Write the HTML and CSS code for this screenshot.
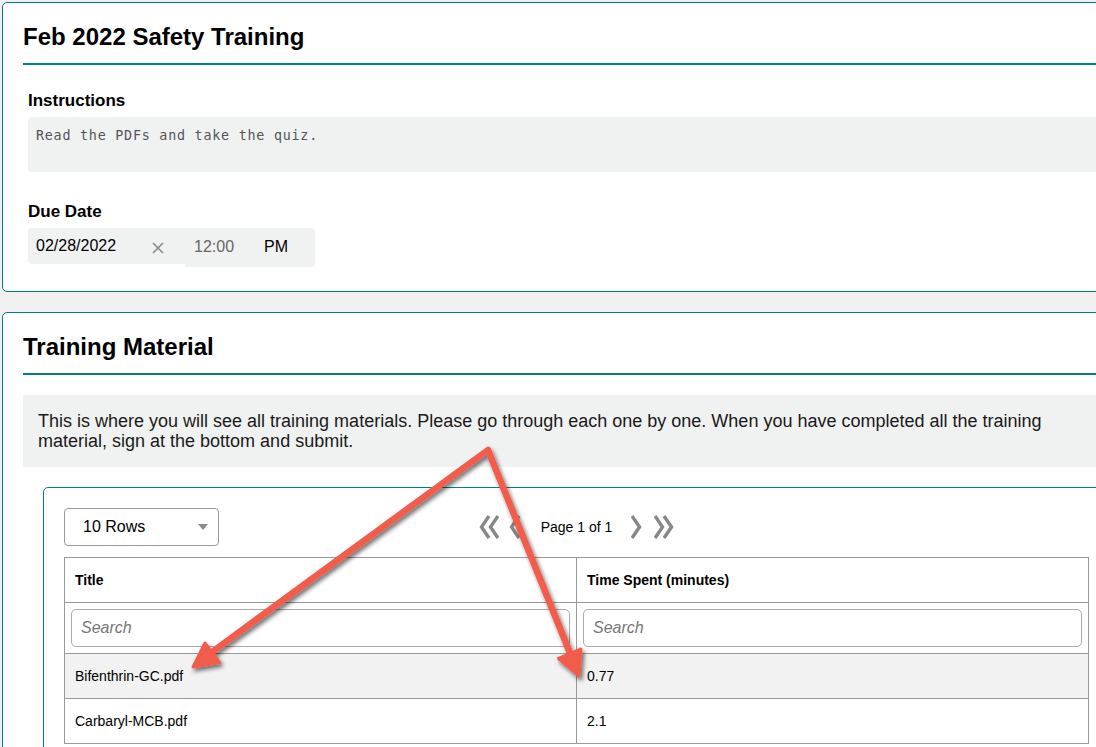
FILE: index.html
```html
<!DOCTYPE html>
<html lang="en">
<head>
<meta charset="utf-8">
<title>Feb 2022 Safety Training</title>
<link rel="stylesheet" href="styles.css">
</head>
<body>
<div class="page">
  <section class="card">
    <h2 class="card-title">Feb 2022 Safety Training</h2>
    <div class="field">
      <div class="field-label">Instructions</div>
      <div class="instructions">Read the PDFs and take the quiz.</div>
    </div>
    <div class="field field-due">
      <div class="field-label">Due Date</div>
      <div class="datetime">
        <div class="date-part">
          <span class="date-value">02/28/2022</span>
          <span class="date-clear">
            <svg width="14" height="14" viewBox="0 0 14 14"><path d="M2 2 L12 12 M12 2 L2 12" stroke="#8a8a8a" stroke-width="1.6" fill="none"/></svg>
          </span>
        </div>
        <div class="time-part">
          <span class="time-value">12:00</span>
          <span class="time-ampm">PM</span>
        </div>
      </div>
    </div>
  </section>

  <section class="card">
    <h2 class="card-title">Training Material</h2>
    <div class="intro">This is where you will see all training materials. Please go through each one by one. When you have completed all the training material, sign at the bottom and submit.</div>

    <div class="grid-box">
      <div class="toolbar">
        <div class="rows-select">
          <span>10 Rows</span>
          <svg class="caret" width="10" height="6" viewBox="0 0 10 6"><path d="M0 0 H10 L5 6 Z" fill="#8a8a8a"/></svg>
        </div>
        <div class="pager">
          <svg class="pg-double" width="20" height="24" viewBox="0 0 20 24"><path d="M10 1 L2.5 12 L10 23 M19 1 L11.5 12 L19 23" stroke="#888" stroke-width="3.4" fill="none"/></svg>
          <svg class="pg-single pg-prev" width="11" height="24" viewBox="0 0 11 24"><path d="M10 1 L2.5 12 L10 23" stroke="#888" stroke-width="3.4" fill="none"/></svg>
          <span class="pg-label">Page 1 of 1</span>
          <svg class="pg-single pg-next" width="11" height="24" viewBox="0 0 11 24"><path d="M1 1 L8.5 12 L1 23" stroke="#888" stroke-width="3.4" fill="none"/></svg>
          <svg class="pg-double" width="20" height="24" viewBox="0 0 20 24"><path d="M1 1 L8.5 12 L1 23 M10 1 L17.5 12 L10 23" stroke="#888" stroke-width="3.4" fill="none"/></svg>
        </div>
        <div></div>
      </div>

      <table class="grid">
        <thead>
          <tr class="head-row"><th>Title</th><th>Time Spent (minutes)</th></tr>
          <tr class="filter-row">
            <td><input class="search" type="text" placeholder="Search"></td>
            <td><input class="search" type="text" placeholder="Search"></td>
          </tr>
        </thead>
        <tbody>
          <tr class="selected"><td>Bifenthrin-GC.pdf</td><td>0.77</td></tr>
          <tr><td>Carbaryl-MCB.pdf</td><td>2.1</td></tr>
        </tbody>
      </table>
    </div>
  </section>
</div>

<svg class="callouts" width="1096" height="747" viewBox="0 0 1096 747">
  <defs>
    <filter id="shade" x="-10%" y="-10%" width="120%" height="120%">
      <feDropShadow dx="2" dy="3" stdDeviation="2" flood-color="#000" flood-opacity="0.55"/>
    </filter>
  </defs>
  <g filter="url(#shade)" fill="#f15b4c" stroke="#f15b4c" stroke-linejoin="round" stroke-linecap="round">
    <polyline points="212,652 488,450 570,653" fill="none" stroke-width="6.5"/>
    <polygon points="193,667 219.5,662.5 205,643" stroke-width="3"/>
    <polygon points="579,676 581,649 558.5,658.5" stroke-width="3"/>
  </g>
</svg>
</body>
</html>
```

FILE: styles.css
```css
html, body {
  margin: 0;
  padding: 0;
}

body {
  width: 1096px;
  height: 747px;
  overflow: hidden;
  background: #f0f0f0;
  font-family: "Liberation Sans", Arial, sans-serif;
  color: #000;
  position: relative;
}

.page {
  width: 1160px;
  padding: 2px 0 0 2px;
  display: flex;
  flex-direction: column;
  gap: 20px;
}

/* ---------- cards ---------- */
.card {
  width: 1149px;
  box-sizing: border-box;
  background: #fff;
  border: 1px solid #008080;
  border-radius: 5px;
  padding: 20px 20px 24px;
}

.card-title {
  margin: 0;
  font-size: 24px;
  line-height: 28px;
  font-weight: bold;
  padding-bottom: 12px;
  border-bottom: 2px solid #008080;
}

/* ---------- form fields ---------- */
.field {
  margin: 26px 0 0 5px;
}

.field-due {
  margin-top: 30px;
}

.field-label {
  font-size: 17px;
  line-height: 20px;
  font-weight: bold;
}

.instructions {
  margin-top: 6px;
  height: 55px;
  box-sizing: border-box;
  padding: 9px 8px;
  background: #f0f1f1;
  border-radius: 4px;
  font-family: "DejaVu Sans Mono", "Liberation Mono", monospace;
  font-size: 13.4px;
  letter-spacing: 0.75px;
  line-height: 20px;
  color: #555;
}

.datetime {
  margin-top: 6px;
  display: flex;
  align-items: flex-start;
}

.date-part {
  width: 157px;
  height: 36px;
  box-sizing: border-box;
  padding-left: 8px;
  display: flex;
  align-items: center;
  background: #f0f1f1;
  border-radius: 4px 0 0 4px;
  font-size: 16px;
}

.date-value {
  margin-top: -1px;
}

.date-clear {
  display: flex;
  margin-left: 35px;
  margin-top: 4px;
}

.time-part {
  width: 130px;
  height: 39px;
  box-sizing: border-box;
  padding-left: 9px;
  display: flex;
  align-items: center;
  background: #f0f1f1;
  border-radius: 0 4px 4px 0;
  font-size: 16px;
}

.time-value {
  color: #666;
  margin-top: -2px;
}

.time-ampm {
  margin-left: 30px;
  margin-top: -2px;
}

/* ---------- training material ---------- */
.intro {
  margin-top: 20px;
  background: #f0f1f1;
  padding: 16px 60px 16px 15px;
  font-size: 18px;
  line-height: 20px;
  color: #1a1a1a;
}

.grid-box {
  margin: 20px 20px 0;
  border: 1px solid #008080;
  border-radius: 5px;
  padding: 20px;
}

.toolbar {
  display: grid;
  grid-template-columns: 1fr auto 1fr;
  align-items: center;
  margin-bottom: 11px;
}

.rows-select {
  justify-self: start;
  width: 155px;
  height: 38px;
  box-sizing: border-box;
  border: 1px solid #999;
  border-radius: 4px;
  padding: 0 10px 0 18px;
  display: flex;
  align-items: center;
  justify-content: space-between;
  font-size: 16px;
}

.pager {
  display: flex;
  align-items: center;
  font-size: 14px;
}

.pg-prev {
  margin-left: 10px;
}

.pg-label {
  margin: 0 19px 0 21px;
}

.pg-next + .pg-double {
  margin-left: 12px;
}

/* ---------- table ---------- */
.grid {
  width: 100%;
  table-layout: fixed;
  border-collapse: collapse;
  border: 1px solid #999;
  font-size: 14px;
}

.grid th,
.grid td {
  border: 1px solid #999;
  text-align: left;
  padding: 13px 10px;
  line-height: 18px;
  vertical-align: middle;
}

.grid th {
  font-weight: bold;
}

.grid .filter-row td {
  padding: 6px;
}

.search {
  display: block;
  width: 100%;
  height: 38px;
  box-sizing: border-box;
  border: 1px solid #aaa;
  border-radius: 5px;
  padding: 0 9px;
  font-family: "Liberation Sans", Arial, sans-serif;
  font-size: 16px;
  background: #fff;
}

.search::placeholder {
  color: #777;
  font-style: italic;
}

.grid tr.selected td {
  background: #f2f2f2;
}

/* ---------- annotation overlay ---------- */
.callouts {
  position: absolute;
  top: 0;
  left: 0;
  pointer-events: none;
}
```
